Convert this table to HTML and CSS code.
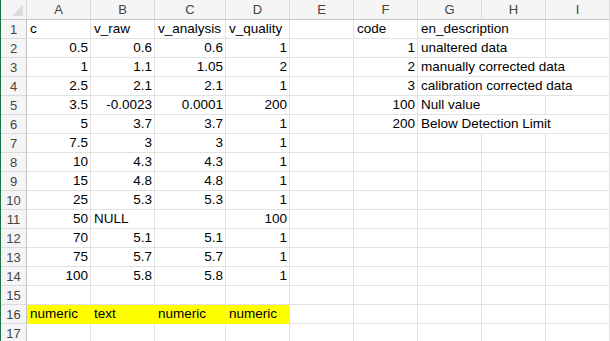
FILE: index.html
```html
<!DOCTYPE html>
<html lang="en">
<head>
    <meta charset="UTF-8">
    <title>Sheet1</title>
    <link rel="stylesheet" href="styles.css">
</head>
<body>

    <!-- Worksheet grid -->
    <div class="sheet">
        <table class="grid">
            <colgroup>
                <col class="col-head">
                <col class="col">
                <col class="col">
                <col class="col-wide">
                <col class="col">
                <col class="col">
                <col class="col">
                <col class="col">
                <col class="col">
                <col class="col">
            </colgroup>
            <thead>
                <tr>
                    <th class="corner"><span class="corner-mark"></span></th>
                    <th>A</th><th>B</th><th>C</th><th>D</th><th>E</th><th>F</th><th>G</th><th>H</th><th>I</th>
                </tr>
            </thead>
            <tbody>
                <tr><th>1</th><td>c</td><td>v_raw</td><td>v_analysis</td><td>v_quality</td><td></td><td>code</td><td class="spill">en_description</td><td></td><td></td></tr>
                <tr><th>2</th><td class="num">0.5</td><td class="num">0.6</td><td class="num">0.6</td><td class="num">1</td><td></td><td class="num">1</td><td class="spill">unaltered data</td><td></td><td></td></tr>
                <tr><th>3</th><td class="num">1</td><td class="num">1.1</td><td class="num">1.05</td><td class="num">2</td><td></td><td class="num">2</td><td class="spill">manually corrected data</td><td class="spill"></td><td></td></tr>
                <tr><th>4</th><td class="num">2.5</td><td class="num">2.1</td><td class="num">2.1</td><td class="num">1</td><td></td><td class="num">3</td><td class="spill">calibration corrected data</td><td class="spill"></td><td></td></tr>
                <tr><th>5</th><td class="num">3.5</td><td class="num">-0.0023</td><td class="num">0.0001</td><td class="num">200</td><td></td><td class="num">100</td><td class="spill">Null value</td><td></td><td></td></tr>
                <tr><th>6</th><td class="num">5</td><td class="num">3.7</td><td class="num">3.7</td><td class="num">1</td><td></td><td class="num">200</td><td class="spill">Below Detection Limit</td><td class="spill"></td><td></td></tr>
                <tr><th>7</th><td class="num">7.5</td><td class="num">3</td><td class="num">3</td><td class="num">1</td><td></td><td></td><td></td><td></td><td></td></tr>
                <tr><th>8</th><td class="num">10</td><td class="num">4.3</td><td class="num">4.3</td><td class="num">1</td><td></td><td></td><td></td><td></td><td></td></tr>
                <tr><th>9</th><td class="num">15</td><td class="num">4.8</td><td class="num">4.8</td><td class="num">1</td><td></td><td></td><td></td><td></td><td></td></tr>
                <tr><th>10</th><td class="num">25</td><td class="num">5.3</td><td class="num">5.3</td><td class="num">1</td><td></td><td></td><td></td><td></td><td></td></tr>
                <tr><th>11</th><td class="num">50</td><td>NULL</td><td></td><td class="num">100</td><td></td><td></td><td></td><td></td><td></td></tr>
                <tr><th>12</th><td class="num">70</td><td class="num">5.1</td><td class="num">5.1</td><td class="num">1</td><td></td><td></td><td></td><td></td><td></td></tr>
                <tr><th>13</th><td class="num">75</td><td class="num">5.7</td><td class="num">5.7</td><td class="num">1</td><td></td><td></td><td></td><td></td><td></td></tr>
                <tr><th>14</th><td class="num">100</td><td class="num">5.8</td><td class="num">5.8</td><td class="num">1</td><td></td><td></td><td></td><td></td><td></td></tr>
                <tr><th>15</th><td></td><td></td><td></td><td></td><td></td><td></td><td></td><td></td><td></td></tr>
                <tr><th>16</th><td class="fill">numeric</td><td class="fill">text</td><td class="fill">numeric</td><td class="fill fill-end">numeric</td><td></td><td></td><td></td><td></td><td></td></tr>
                <tr><th>17</th><td></td><td></td><td></td><td></td><td></td><td></td><td></td><td></td><td></td></tr>
            </tbody>
        </table>
    </div>

</body>
</html>
```

FILE: styles.css
```css
/* Global Styles */
body {
    margin: 0;
    background-color: #ffffff;
    font-family: 'Liberation Sans', Arial, sans-serif;
    color: #000;
    overflow: hidden;
}

/* Worksheet area, green edge on the left like the app frame */
.sheet {
    border-left: 1px solid #1e7145;
}

.grid {
    table-layout: fixed;
    border-collapse: separate;
    border-spacing: 0;
    width: 609px;
    font-size: 13.5px;
}

.col-head {
    width: 26px;
}

.col {
    width: 64px;
}

.col-wide {
    width: 71px;
}

/* Column and row headers */
th {
    background-color: #f5f5f5;
    color: #444;
    font-weight: normal;
    font-size: 13px;
    text-align: center;
    padding: 0;
    box-sizing: border-box;
    border-right: 1px solid #dadada;
    border-bottom: 1px solid #dadada;
}

thead th {
    height: 20px;
    border-bottom-color: #c4c4c4;
    line-height: 19px;
}

tbody th {
    border-right-color: #c4c4c4;
}

.corner {
    position: relative;
}

/* small triangle in the top-left corner */
.corner-mark {
    position: absolute;
    right: 3px;
    bottom: 3px;
    width: 0;
    height: 0;
    border-left: 11px solid transparent;
    border-bottom: 12px solid #dcdcdc;
}

/* Cells */
td {
    height: 19px;
    box-sizing: border-box;
    padding: 0 2px 0 3px;
    line-height: 18px;
    white-space: nowrap;
    overflow: visible;
    border-right: 1px solid #e1e1e1;
    border-bottom: 1px solid #e1e1e1;
}

.num {
    text-align: right;
}

/* text running into the next cell hides the gridline */
.spill {
    border-right-color: transparent;
}

/* Highlighted row */
.fill {
    background-color: #ffff00;
    border-right-color: #ffff00;
    border-bottom-color: #ffff00;
}

.fill-end {
    border-right-color: #e1e1e1;
}
```
